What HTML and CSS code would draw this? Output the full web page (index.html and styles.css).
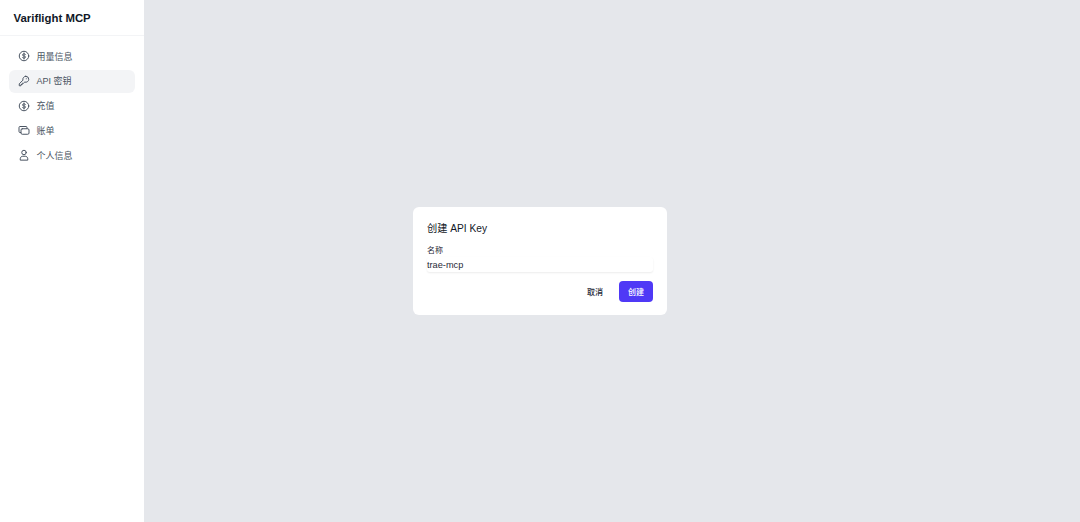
FILE: index.html
```html
<!DOCTYPE html>
<html lang="en">
<head>
    <meta charset="UTF-8">
    <meta name="viewport" content="width=device-width, initial-scale=1.0">
    <title>API Keys</title>
    <link rel="stylesheet" href="styles.css">
</head>
<body>
    <div class="layout">
        <aside class="sidebar">
            <div class="brand">Variflight MCP</div>
            <nav class="nav">
                <a class="nav-item">
                    <svg class="nav-icon" viewBox="0 0 24 24"><circle cx="12" cy="12" r="9.5"/><path d="M15 9.200c-.5-1-1.600-1.400-3-1.400-1.700 0-3 .8-3 2.100s1.200 1.800 3 2.100 3 .8 3 2.100-1.300 2.100-3 2.100c-1.400 0-2.500-.4-3-1.400M12 6v12"/></svg>
                    <span>用量信息</span>
                </a>
                <a class="nav-item active">
                    <svg class="nav-icon" viewBox="0 0 24 24"><path d="M15.500 2.500a6 6 0 0 1 6 6 6 6 0 0 1-8 5.600L11 16.500H8.500V19H6v2.500H2.500v-3.800l7.400-7.400A6 6 0 0 1 15.500 2.500z"/><path d="M16.500 7.500h.1"/></svg>
                    <span>API 密钥</span>
                </a>
                <a class="nav-item">
                    <svg class="nav-icon" viewBox="0 0 24 24"><circle cx="12" cy="12" r="9.500"/><path d="M15 9.200c-.5-1-1.600-1.400-3-1.400-1.700 0-3 .8-3 2.100s1.200 1.800 3 2.100 3 .8 3 2.100-1.300 2.100-3 2.100c-1.400 0-2.500-.4-3-1.400M12 6v12"/></svg>
                    <span>充值</span>
                </a>
                <a class="nav-item">
                    <svg class="nav-icon" viewBox="0 0 24 24"><path d="M5.500 17H4a2 2 0 0 1-2-2V7a2 2 0 0 1 2-2h12a2 2 0 0 1 2 2v2"/><rect x="6" y="9.500" width="16" height="11" rx="2.500"/></svg>
                    <span>账单</span>
                </a>
                <a class="nav-item">
                    <svg class="nav-icon" viewBox="0 0 24 24"><circle cx="12" cy="7" r="4.500"/><path d="M4.500 21.500v-2c0-3 2.500-5 5-5h5c2.500 0 5 2 5 5v2z"/></svg>
                    <span>个人信息</span>
                </a>
            </nav>
        </aside>
        <main class="main"></main>
    </div>

    <div class="modal-backdrop">
        <div class="modal">
            <h2 class="modal-title">创建 API Key</h2>
            <label class="field-label" for="key-name">名称</label>
            <input class="field-input" id="key-name" type="text" value="trae-mcp">
            <div class="modal-actions">
                <button class="btn btn-ghost">取消</button>
                <button class="btn btn-primary">创建</button>
            </div>
        </div>
    </div>
</body>
</html>
```

FILE: styles.css
```css
* {
    box-sizing: border-box;
}
html, body {
    height: 100%;
}
body {
    margin: 0;
    font-family: 'Liberation Sans', 'Noto Sans CJK SC', sans-serif;
    color: #111827;
    overflow: hidden;
}
.layout {
    display: flex;
    height: 100%;
}
.sidebar {
    width: 144px;
    background: #fff;
    flex-shrink: 0;
}
.brand {
    height: 36px;
    padding: 0 13.5px;
    border-bottom: 1px solid #f3f4f6;
    font-size: 11.400px;
    font-weight: 700;
    line-height: 36px;
    color: #111827;
}
.nav {
    display: flex;
    flex-direction: column;
    gap: 1.800px;
    padding: 9px;
}
.nav-item {
    display: flex;
    align-items: center;
    gap: 6.500px;
    height: 23px;
    padding: 0 9px 1px;
    border-radius: 6px;
    font-size: 9px;
    color: #4b5563;
}
.nav-item.active {
    background: #f3f4f6;
}
.nav-icon {
    width: 12px;
    height: 12px;
    flex-shrink: 0;
    fill: none;
    stroke: #4b5563;
    stroke-width: 2;
    stroke-linecap: round;
    stroke-linejoin: round;
}
.main {
    flex: 1;
    background: #e5e7eb;
}
.modal-backdrop {
    position: fixed;
    inset: 0;
    display: flex;
    align-items: center;
    justify-content: center;
    pointer-events: none;
}
.modal {
    width: 254px;
    height: 108px;
    padding: 14px;
    background: #fff;
    border-radius: 6px;
}
.modal-title {
    margin: 0 0 10px;
    font-size: 10.200px;
    font-weight: 400;
    line-height: 15px;
    color: #111827;
}
.field-label {
    display: block;
    font-size: 8px;
    line-height: 10px;
    color: #1f2937;
}
.field-input {
    display: block;
    width: 100%;
    height: 15px;
    margin-top: 1px;
    padding: 0;
    border: none;
    border-radius: 3px;
    outline: none;
    font-family: inherit;
    font-size: 9.200px;
    color: #1f2937;
    box-shadow: 0 1px 2px rgba(0, 0, 0, 0.08);
}
.modal-actions {
    display: flex;
    justify-content: flex-end;
    align-items: center;
    gap: 7px;
    margin-top: 9px;
}
.btn {
    height: 21px;
    width: 34px;
    padding: 0;
    border: none;
    border-radius: 4px;
    font-family: inherit;
    font-size: 8px;
    font-weight: 500;
}
.btn-ghost {
    background: transparent;
    color: #1f2937;
}
.btn-primary {
    background: #4f39f6;
    color: #fff;
}
```
